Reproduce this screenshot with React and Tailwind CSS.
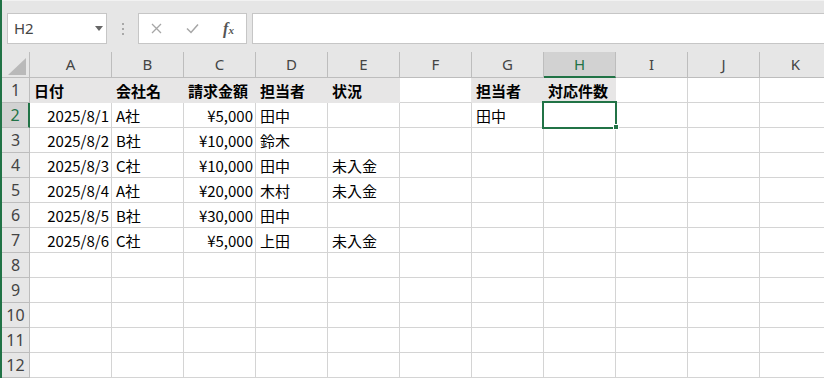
import React from "react";

const COLS = ["A", "B", "C", "D", "E", "F", "G", "H", "I", "J", "K"];

const data = {
  1: { A: "日付", B: "会社名", C: "請求金額", D: "担当者", E: "状況", G: "担当者", H: "対応件数" },
  2: { A: "2025/8/1", B: "A社", C: "¥5,000", D: "田中", G: "田中" },
  3: { A: "2025/8/2", B: "B社", C: "¥10,000", D: "鈴木" },
  4: { A: "2025/8/3", B: "C社", C: "¥10,000", D: "田中", E: "未入金" },
  5: { A: "2025/8/4", B: "A社", C: "¥20,000", D: "木村", E: "未入金" },
  6: { A: "2025/8/5", B: "B社", C: "¥30,000", D: "田中" },
  7: { A: "2025/8/6", B: "C社", C: "¥5,000", D: "上田", E: "未入金" },
};

const filled1 = ["A", "B", "C", "D", "E", "G", "H"];

function Cell({ r, c }) {
  const v = data[r] ? data[r][c] : undefined;
  const right = r >= 2 && (c === "A" || c === "C");
  const isFilled = r === 1 && filled1.includes(c);
  const prevFilledRight = r === 1 && c === "F";
  let cls =
    "border-r border-b flex items-center whitespace-nowrap overflow-hidden pl-[4px] pr-[2px] text-[15px] leading-none text-black ";
  if (isFilled) {
    cls += "bg-[#e7e6e6] border-[#e7e6e6] font-bold ";
  } else if (prevFilledRight) {
    cls += "bg-white border-b-[#d4d4d4] border-r-[#e7e6e6] ";
  } else {
    cls += "bg-white border-[#d4d4d4] ";
  }
  if (right) cls += "justify-end ";
  return <div className={cls}>{v}</div>;
}

export default function App() {
  const rows = Array.from({ length: 12 }, (_, i) => i + 1);
  return (
    <div
      className="relative w-[824px] h-[378px] overflow-hidden bg-[#e6e6e6] border-l-2 border-[#217346]"
      style={{ fontFamily: '"Noto Sans CJK JP", "Noto Sans", sans-serif' }}
    >
      {/* top formula bar */}
      <div className="h-[52px] flex items-start pt-[12px] pl-[5px] border-t border-[#f2f2f2]">
        <div className="relative w-[100px] h-[31px] bg-white border border-[#c6c6c6] flex items-center pl-[6px] text-[15px] text-[#444]" style={{ fontFamily: '"Noto Sans", sans-serif' }}>
          H2
          <svg className="absolute left-[87px] top-[12px]" width="8" height="5" viewBox="0 0 8 5">
            <path d="M0 0 L8 0 L4 5 Z" fill="#666" />
          </svg>
        </div>
        <div className="w-[31px] h-[31px] flex flex-col items-center justify-center gap-[3px]">
          <div className="w-[2px] h-[2px] bg-[#a8a8a8]" />
          <div className="w-[2px] h-[2px] bg-[#a8a8a8]" />
          <div className="w-[2px] h-[2px] bg-[#a8a8a8]" />
        </div>
        <div className="w-[109px] h-[31px] bg-white border border-[#c6c6c6] flex items-center justify-around">
          <svg width="11" height="11" viewBox="0 0 11 11">
            <path d="M1 1 L10 10 M10 1 L1 10" stroke="#a6a6a6" strokeWidth="1.3" />
          </svg>
          <svg width="13" height="11" viewBox="0 0 13 11">
            <path d="M1 5.5 L5 9.5 L12 1.5" stroke="#a6a6a6" strokeWidth="1.5" fill="none" />
          </svg>
          <span className="italic font-bold text-[16px] text-[#555] leading-none" style={{ fontFamily: '"Liberation Serif", serif' }}>
            f<span className="text-[11px]">x</span>
          </span>
        </div>
        <div className="flex-1 h-[31px] ml-[5px] -mr-[4px] bg-white border border-[#c6c6c6]" />
      </div>

      {/* grid */}
      <div className="grid grid-cols-[28px_82px_repeat(10,72px)] grid-rows-[26px_repeat(12,25px)]">
        {/* corner */}
        <div className="relative border-r border-b border-[#bdbdbd] bg-[#e6e6e6]">
          <svg className="absolute left-[6px] top-[6px]" width="18" height="17" viewBox="0 0 18 17">
            <path d="M18 0 L18 17 L0 17 Z" fill="#b9b9b9" />
          </svg>
        </div>
        {COLS.map((c) =>
          c === "H" ? (
            <div
              key={c}
              className="border-r border-r-[#bdbdbd] border-b-2 border-b-[#217346] bg-[#d2d2d2] flex items-center justify-center text-[15px] text-[#217346]"
              style={{ fontFamily: '"Noto Sans", sans-serif' }}
            >
              {c}
            </div>
          ) : (
            <div
              key={c}
              className="border-r border-b border-[#bdbdbd] bg-[#e6e6e6] flex items-center justify-center text-[15px] text-[#444]"
              style={{ fontFamily: '"Noto Sans", sans-serif' }}
            >
              {c}
            </div>
          )
        )}
        {rows.map((r) => (
          <React.Fragment key={r}>
            {r === 2 ? (
              <div
                className="border-r-2 border-r-[#217346] border-b border-b-[#bdbdbd] bg-[#d2d2d2] flex items-center justify-center text-[16px] text-[#217346]"
                style={{ fontFamily: '"Noto Sans", sans-serif' }}
              >
                {r}
              </div>
            ) : (
              <div
                className="border-r border-b border-[#bdbdbd] bg-[#e6e6e6] flex items-center justify-center text-[16px] text-[#444]"
                style={{ fontFamily: '"Noto Sans", sans-serif' }}
              >
                {r}
              </div>
            )}
            {COLS.map((c) => (
              <Cell key={c} r={r} c={c} />
            ))}
          </React.Fragment>
        ))}
      </div>

      {/* selection */}
      <div className="absolute left-[540px] top-[101px] w-[75px] h-[28px] border-2 border-[#217346]" />
      <div className="absolute left-[611px] top-[124px] w-[6px] h-[6px] bg-[#217346] border border-white" />
    </div>
  );
}
